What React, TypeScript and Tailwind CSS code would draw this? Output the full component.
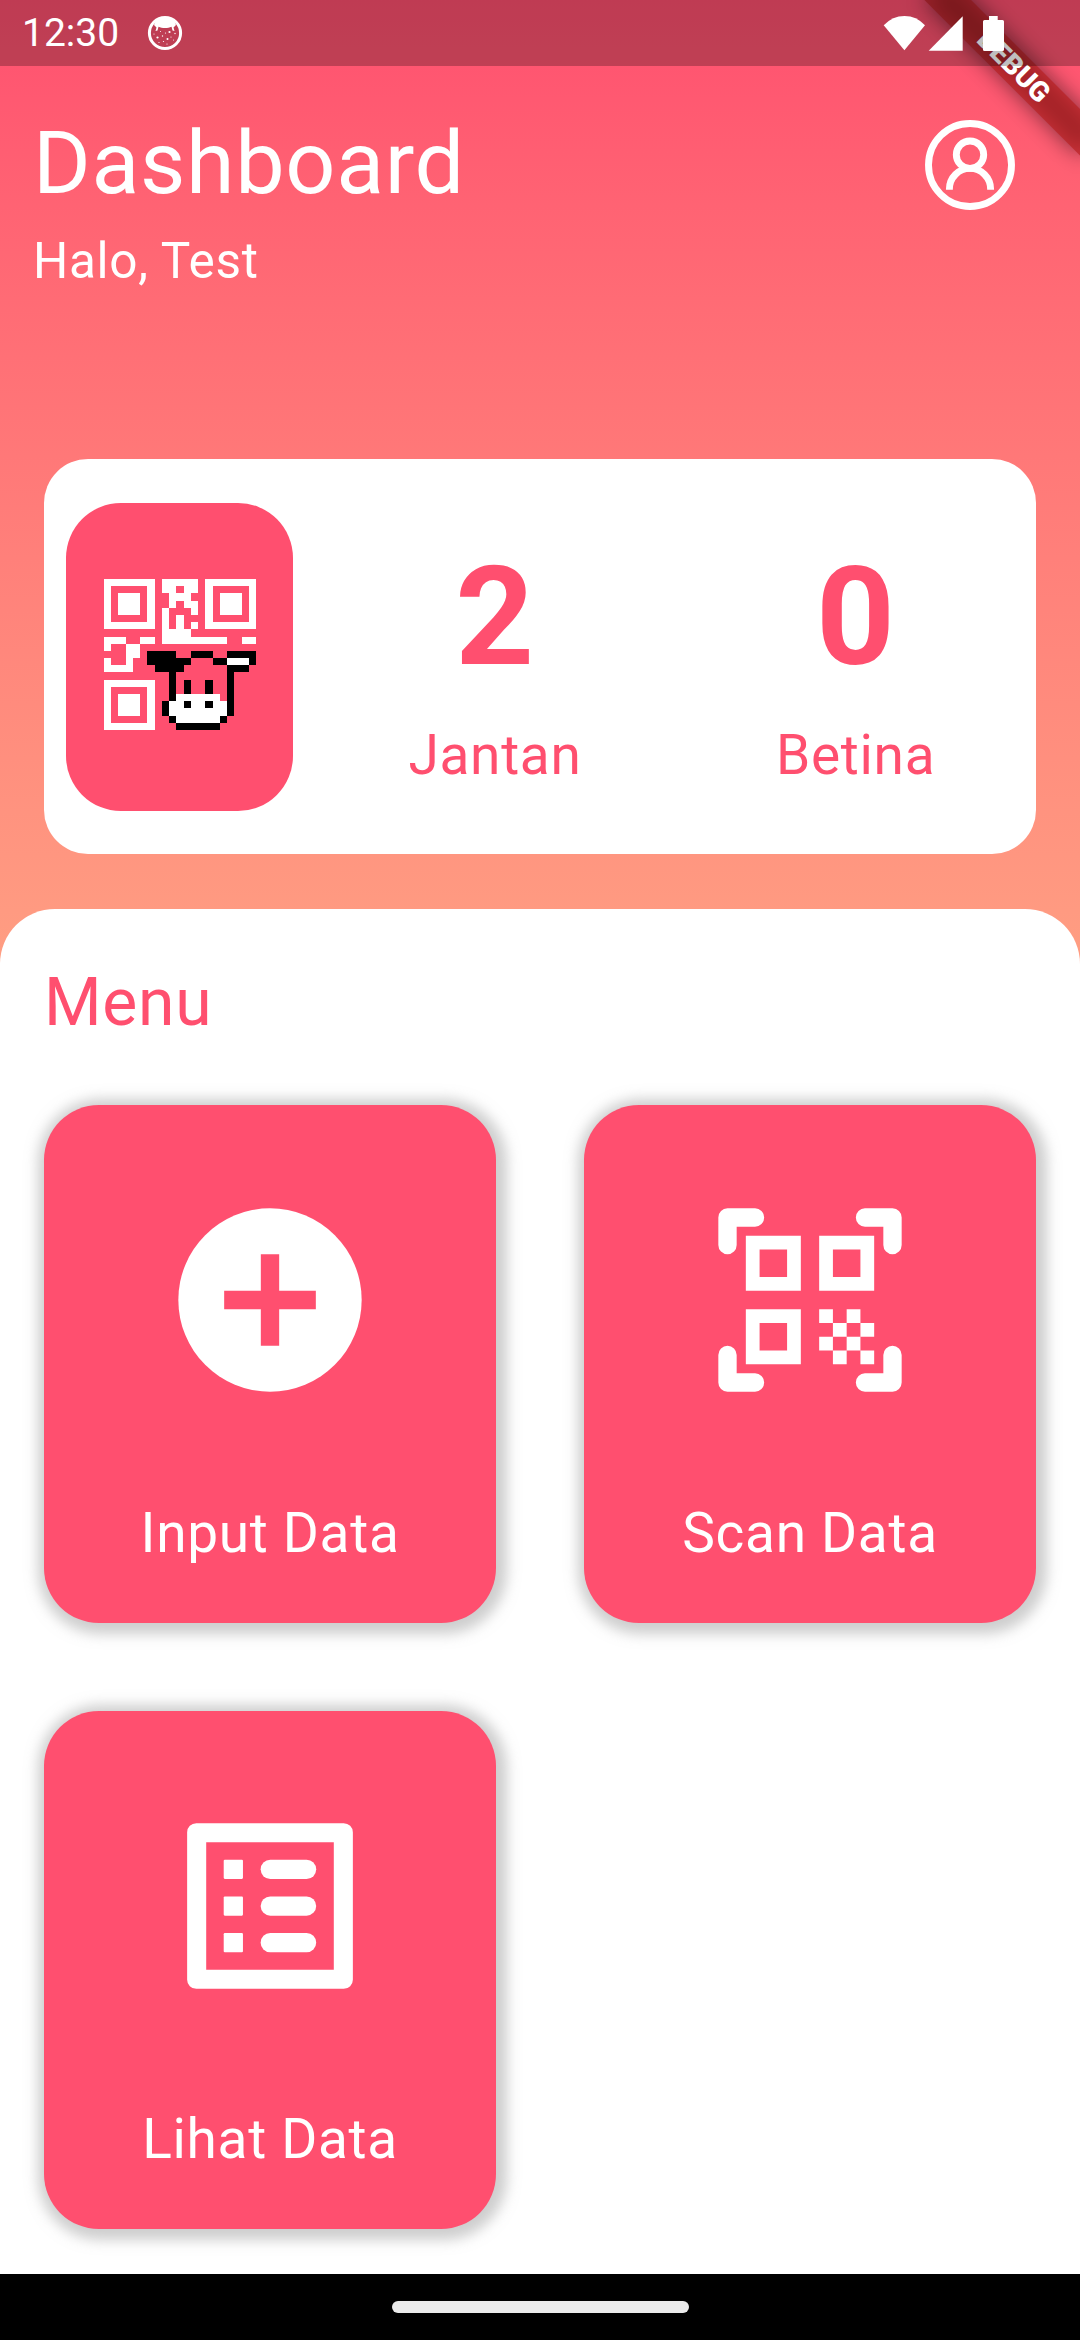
import type { ReactNode } from "react";

const LOGO = [
  "WWWWWWW.WWWWW.WWWWWWW",
  "W.....W.WW.WW.W.....W",
  "W.WWW.W..WWW..W.WWW.W",
  "W.WWW.W..W.WW.W.WWW.W",
  "W.WWW.W.W...W.W.WWW.W",
  "W.....W.W.W...W.....W",
  "WWWWWWW.W.W.W.WWWWWWW",
  "........WWWW.........",
  "WWW..WW.WWWWWWWWW..WW",
  "W..WW................",
  "...WW.BBBB..BBB..BBBB",
  "W..W..BBBBBB...BBWWWB",
  "WWWW...BBBB......BBB.",
  ".........B.......B...",
  "WWWWWWW..B.B..B..B...",
  "W.....W..B.B..B..B...",
  "W.WWW.W..BWWWWWW.B...",
  "W.WWW.W.BWWBWWBWWB...",
  "W.WWW.W.BWWWWWWWWB...",
  "W.....W..BWWWWWWB....",
  "WWWWWWW...BBBBBB.....",
];

function CowLogo() {
  return (
    <svg
      viewBox="0 0 21 21"
      preserveAspectRatio="none"
      shapeRendering="crispEdges"
      className="mb-1 ml-[1.3px] h-[151px] w-[152px]"
    >
      {LOGO.flatMap((row, y) =>
        [...row].map((c, x) =>
          c === "." ? null : (
            <rect key={`${x}-${y}`} x={x} y={y} width="1" height="1" fill={c === "W" ? "#fff" : "#000"} />
          ),
        ),
      )}
    </svg>
  );
}

function CatIcon() {
  return (
    <svg viewBox="0 0 36 36" className="h-9 w-9">
      <circle cx="18" cy="18" r="15.6" fill="none" stroke="#fff" strokeWidth="3" />
      <path
        d="M9 5C12 1.500 24 1.500 27 5L29 10L26.500 12.500L27.500 16L25.500 15.500L24.500 11.700C21 13.400 15 13.400 11.500 11.700L10.500 15.500L8.500 16L9.500 12.500L7 10Z"
        fill="#fff"
      />
      <g fill="#fff">
        <circle cx="10.500" cy="22.500" r="1.100" />
        <circle cx="20.500" cy="24" r="1" />
        <circle cx="22.500" cy="17" r="1.100" />
        <circle cx="15.500" cy="21" r=".7" />
        <circle cx="18.500" cy="18" r=".6" />
        <circle cx="13.500" cy="16.500" r=".5" />
        <circle cx="7" cy="19" r=".6" />
        <circle cx="24" cy="22" r=".6" />
        <circle cx="28" cy="18.500" r=".7" />
        <circle cx="16.500" cy="26.500" r=".6" />
        <circle cx="12" cy="27.500" r=".6" />
        <circle cx="20" cy="29" r=".6" />
        <circle cx="26.500" cy="25" r=".5" />
      </g>
    </svg>
  );
}

function StatusIcons() {
  return (
    <svg viewBox="0 0 124 36" fill="#fff" className="h-9 w-[124px]">
      <path d="M.7 10.300Q9.500 1 21.500 1T42 10.300L21.400 35.300Z" />
      <path d="M79.700 1.300V35.700H45.700Z" />
      <path d="M106 1H114.700V5H119.500Q121 5 121 6.500V34.800Q121 36 119.500 36H101.500Q100 36 100 34.800V6.500Q100 5 101.500 5H106Z" />
    </svg>
  );
}

function ProfileIcon() {
  return (
    <svg viewBox="0 0 110 110" fill="none" stroke="#fff" strokeWidth="6.9" className="h-[110px] w-[110px]">
      <circle cx="55" cy="55" r="41.500" />
      <circle cx="55" cy="44.700" r="13.700" />
      <path d="M34.400 79.700V79A20.600 20.600 0 0 1 75.600 79V79.700" />
    </svg>
  );
}

function AddIcon() {
  return (
    <svg viewBox="0 0 24 24" className="h-[220px] w-[220px]">
      <circle cx="12" cy="12" r="10" fill="#fff" />
      <path d="M11 7h2v4h4v2h-4v4h-2v-4H7v-2h4z" fill="#ff4f6f" />
    </svg>
  );
}

function ScanIcon() {
  return (
    <svg viewBox="0 0 24 24" fill="#fff" fillRule="evenodd" className="h-[220px] w-[220px]">
      <path d="M3 2h3a1 1 0 0 1 0 2H4v2a1 1 0 0 1-2 0V3a1 1 0 0 1 1-1z" />
      <path d="M21 2h-3a1 1 0 0 0 0 2h2v2a1 1 0 0 0 2 0V3a1 1 0 0 0-1-1z" />
      <path d="M3 22h3a1 1 0 0 0 0-2H4v-2a1 1 0 0 0-2 0v3a1 1 0 0 0 1 1z" />
      <path d="M21 22h-3a1 1 0 0 1 0-2h2v-2a1 1 0 0 1 2 0v3a1 1 0 0 1-1 1z" />
      <path d="M5 5h6v6H5zM6.500 6.500v3h3v-3zM13 5h6v6h-6zM14.500 6.500v3h3v-3zM5 13h6v6H5zM6.500 14.500v3h3v-3z" />
      <path d="M13 13h1.500v1.500H13zM16 13h1.500v1.500H16zM14.500 14.500H16V16h-1.500zM17.500 14.500H19V16h-1.500zM13 16h1.500v1.500H13zM16 16h1.500v1.500H16zM14.500 17.500H16V19h-1.500zM17.500 17.500H19V19h-1.500z" />
    </svg>
  );
}

function ListIcon() {
  return (
    <svg viewBox="0 0 24 24" fill="#fff" className="h-[220px] w-[220px]">
      <path
        fillRule="evenodd"
        d="M3.960 2.960h16.080a1 1 0 0 1 1 1v16.080a1 1 0 0 1-1 1H3.960a1 1 0 0 1-1-1V3.960a1 1 0 0 1 1-1zM5.040 5.040v13.920h13.920V5.040z"
      />
      {[7, 11, 15].map((y) => (
        <g key={y}>
          <rect x="6.950" y={y - 0.05} width="2.100" height="2.100" rx=".12" />
          <rect x="10.980" y={y - 0.05} width="6.060" height="2.100" rx="1.050" />
        </g>
      ))}
    </svg>
  );
}

function Stat({ value, label }: { value: string; label: string }) {
  return (
    <div className="flex flex-1 flex-col items-center pt-[77.400px]">
      <span className="text-[137.500px] leading-[161px] font-bold">{value}</span>
      <span className="mt-[25px] text-[55px] leading-[65px]">{label}</span>
    </div>
  );
}

function MenuCard({ icon, label }: { icon: ReactNode; label: string }) {
  return (
    <button className="flex h-[518px] flex-col items-center rounded-[55px] bg-[#ff4f6f] pt-[84.400px] tracking-[0.6875px] text-white shadow-[2.75px_2.75px_12.5px_8.25px_rgba(158,158,158,0.5)]">
      {icon}
      <span className="mt-[91px] text-[55px] leading-[65px]">{label}</span>
    </button>
  );
}

function DebugBanner() {
  return (
    <div className="absolute top-0 left-full h-0 w-0 origin-top-left rotate-45 tracking-normal">
      <div className="absolute top-[77px] left-[-110px] h-[33px] w-[220px] bg-black/50 blur-[11px]" />
      <div className="absolute top-[77px] left-[-110px] flex h-[33px] w-[220px] items-center justify-center bg-[#b71c1c]/63 text-[28px] leading-none font-black text-white">
        DEBUG
      </div>
    </div>
  );
}

export default function App() {
  return (
    <div className="relative flex h-[2340px] w-[1080px] flex-col overflow-hidden bg-linear-to-b from-[#ff4f6f] to-[#ffa183] to-[1010px] font-['Roboto',sans-serif] tracking-[0.6875px]">
      <DebugBanner />
      <header className="relative flex h-[66px] shrink-0 items-center bg-black/25 pr-[73px] pl-[22px] tracking-normal text-white">
        <span className="text-[39px] leading-none">12:30</span>
        <span className="ml-[27.500px]">
          <CatIcon />
        </span>
        <span className="ml-auto">
          <StatusIcons />
        </span>
      </header>

      <div className="flex h-[393.300px] shrink-0 justify-between pr-[55px] pl-[33px] text-white">
        <div className="pt-[44.600px]">
          <h1 className="text-[88px] leading-[104px]">Dashboard</h1>
          <p className="mt-[17.200px] text-[49.500px] leading-[58px]">Halo, Test</p>
        </div>
        <div className="pt-[44.300px]">
          <ProfileIcon />
        </div>
      </div>

      <section className="mx-11 flex h-[395px] shrink-0 rounded-[44px] bg-white pl-[22px] text-[#ff4f6f]">
        <div className="mt-11 mr-[22px] flex h-[307.300px] w-[226.700px] items-center justify-center rounded-[55px] bg-[#ff4f6f]">
          <CowLogo />
        </div>
        <Stat value="2" label="Jantan" />
        <Stat value="0" label="Betina" />
      </section>

      <main className="mt-[55px] flex-1 rounded-t-[55px] bg-white px-11 pt-[54.600px]">
        <h2 className="text-[66px] leading-[77px] text-[#ff4f6f]">Menu</h2>
        <div className="mt-[64.400px] grid grid-cols-2 gap-[88px]">
          <MenuCard icon={<AddIcon />} label="Input Data" />
          <MenuCard icon={<ScanIcon />} label="Scan Data" />
          <MenuCard icon={<ListIcon />} label="Lihat Data" />
        </div>
      </main>

      <footer className="flex h-[66px] shrink-0 items-center justify-center bg-black">
        <div className="h-[11.500px] w-[297px] rounded-full bg-[#ebebeb]" />
      </footer>
    </div>
  );
}
